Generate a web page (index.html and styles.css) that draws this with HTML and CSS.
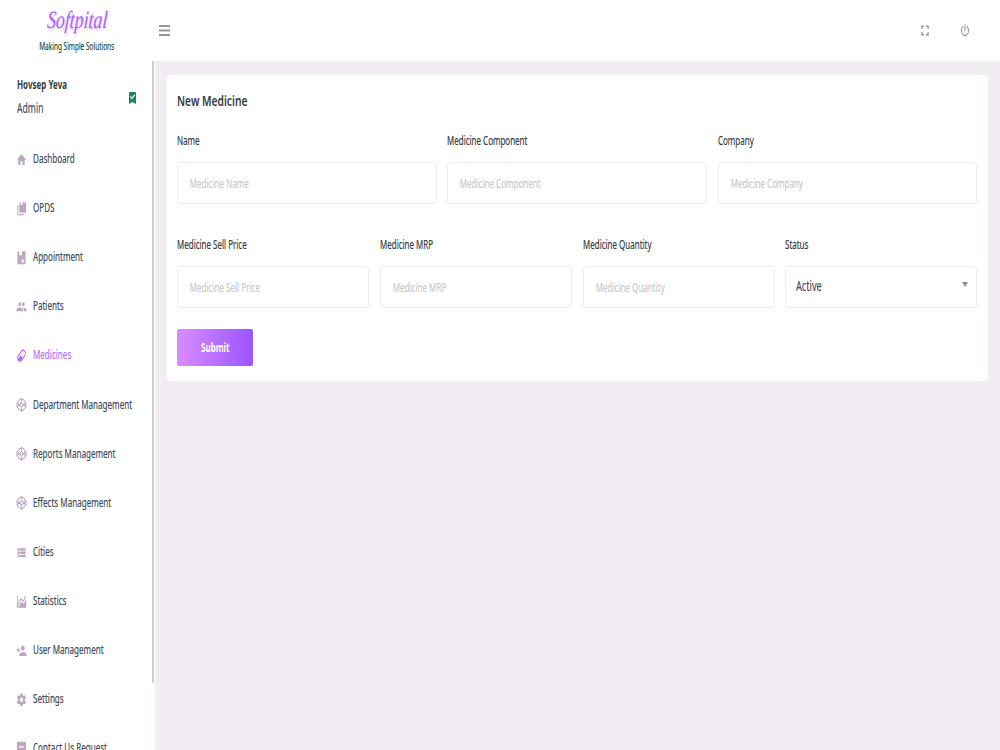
FILE: index.html
```html
<!DOCTYPE html>
<html lang="en">
<head>
    <meta charset="UTF-8">
    <meta name="viewport" content="width=device-width, initial-scale=1.0">
    <title>New Medicine</title>
    <link rel="stylesheet" href="styles.css">
</head>
<body>

<header class="navbar">
    <div class="brand">
        <span class="brand-name">Softpital</span>
        <span class="brand-slogan">Making Simple Solutions</span>
    </div>
    <button class="icon-button menu-toggle">
        <svg viewBox="0 0 11 11" preserveAspectRatio="none"><path d="M0,0H11V2H0zM0,4.5H11V6.5H0zM0,9H11V11H0z"/></svg>
    </button>
    <div class="navbar-right">
        <button class="icon-button">
            <svg class="nav-icon" viewBox="0 0 24 24" preserveAspectRatio="none"><path d="M4.5,5H10V7.2H7V10H4.5V5M14,5H19.5V10H17V7.2H14V5M17,14H19.5V19H14V16.8H17V14M10,16.8V19H4.5V14H7V16.8H10Z"/></svg>
        </button>
        <button class="icon-button">
            <svg class="nav-icon" viewBox="0 0 24 24" preserveAspectRatio="none"><path d="M16.56,5.44L15.11,6.89C16.84,7.94 18,9.83 18,12A6,6 0 0,1 12,18A6,6 0 0,1 6,12C6,9.83 7.16,7.94 8.88,6.88L7.44,5.44C5.36,6.88 4,9.28 4,12A8,8 0 0,0 12,20A8,8 0 0,0 20,12C20,9.28 18.64,6.88 16.56,5.44M13,3H11V13H13"/></svg>
        </button>
    </div>
</header>

<div class="page-body">
    <nav class="sidebar">
        <div class="profile">
            <div class="profile-text">
                <span class="profile-name">Hovsep Yeva</span>
                <span class="profile-role">Admin</span>
            </div>
            <svg class="profile-badge" viewBox="5 3 14 18" preserveAspectRatio="none"><path d="M17,3A2,2 0 0,1 19,5V21L12,18L5,21V5C5,3.89 5.9,3 7,3H17M11,14L17.25,7.76L15.84,6.34L11,11.18L8.41,8.59L7,10L11,14Z"/></svg>
        </div>
        <ul class="menu">
            <li class="menu-item">
                <svg class="menu-icon" viewBox="0 0 24 24" preserveAspectRatio="none"><path d="M10,20V14H14V20H19V12H22L12,3L2,12H5V20H10Z"/></svg>
                <span class="menu-title">Dashboard</span>
            </li>
            <li class="menu-item">
                <svg class="menu-icon" viewBox="0 0 24 24" preserveAspectRatio="none"><path d="M20,18H9A2,2 0 0,1 7,16V4A2,2 0 0,1 9,2H10V7L12,5.5L14,7V2H20A2,2 0 0,1 22,4V16A2,2 0 0,1 20,18M17,20V22H5A2,2 0 0,1 3,20V6H5V20H17Z"/></svg>
                <span class="menu-title">OPDS</span>
            </li>
            <li class="menu-item">
                <svg class="menu-icon" viewBox="0 0 24 24" preserveAspectRatio="none"><path fill-rule="evenodd" d="M19,22H5A2,2 0 0,1 3,20V4A2,2 0 0,1 5,2H7V9L10,7.5L13,9V2H19A2,2 0 0,1 21,4V20A2,2 0 0,1 19,22M14,20H16V18H18V16H16V14H14V16H12V18H14Z"/></svg>
                <span class="menu-title">Appointment</span>
            </li>
            <li class="menu-item">
                <svg class="menu-icon" viewBox="0 0 24 24" preserveAspectRatio="none"><path d="M16,13C15.71,13 15.38,13 15.03,13.05C16.19,13.89 17,15 17,16.5V19H23V16.5C23,14.17 18.33,13 16,13M8,13C5.67,13 1,14.17 1,16.5V19H15V16.5C15,14.17 10.33,13 8,13M8,11A3,3 0 0,0 11,8A3,3 0 0,0 8,5A3,3 0 0,0 5,8A3,3 0 0,0 8,11M16,11A3,3 0 0,0 19,8A3,3 0 0,0 16,5A3,3 0 0,0 13,8A3,3 0 0,0 16,11Z"/></svg>
                <span class="menu-title">Patients</span>
            </li>
            <li class="menu-item active">
                <svg class="menu-icon" viewBox="0 0 24 24" preserveAspectRatio="none"><path d="M4.22,11.29L11.29,4.22C13.64,1.88 17.43,1.88 19.78,4.22C22.12,6.56 22.12,10.36 19.78,12.71L12.71,19.78C10.36,22.12 6.56,22.12 4.22,19.78C1.88,17.43 1.88,13.64 4.22,11.29M10.59,10.59L14.83,14.83L18.36,11.29C19.93,9.73 19.93,7.2 18.36,5.64C16.8,4.07 14.27,4.07 12.71,5.64L5.64,12.71C4.59,13.75 4.24,15.24 4.6,16.57L10.59,10.59Z"/></svg>
                <span class="menu-title">Medicines</span>
            </li>
            <li class="menu-item">
                <svg class="menu-icon outline" viewBox="0 0 24 24" preserveAspectRatio="none"><path d="M12,2.5L17.5,5L22,9.5V14.5L17.5,19L12,21.5L6.5,19L2,14.5V9.5L6.5,5ZM12,2.5V9M12,15V21.5M2.5,9L12,15L21.5,9M2.5,15L12,9L21.5,15"/></svg>
                <span class="menu-title">Department Management</span>
            </li>
            <li class="menu-item">
                <svg class="menu-icon outline" viewBox="0 0 24 24" preserveAspectRatio="none"><path d="M12,2.5L17.5,5L22,9.5V14.5L17.5,19L12,21.5L6.5,19L2,14.5V9.5L6.5,5ZM12,2.5V9M12,15V21.5M2.5,9L12,15L21.5,9M2.5,15L12,9L21.5,15"/></svg>
                <span class="menu-title">Reports Management</span>
            </li>
            <li class="menu-item">
                <svg class="menu-icon outline" viewBox="0 0 24 24" preserveAspectRatio="none"><path d="M12,2.5L17.5,5L22,9.5V14.5L17.5,19L12,21.5L6.5,19L2,14.5V9.5L6.5,5ZM12,2.5V9M12,15V21.5M2.5,9L12,15L21.5,9M2.5,15L12,9L21.5,15"/></svg>
                <span class="menu-title">Effects Management</span>
            </li>
            <li class="menu-item">
                <svg class="menu-icon" viewBox="0 0 24 24" preserveAspectRatio="none"><path d="M9,5V9H21V5M9,19H21V15H9M9,14H21V10H9M3,9H8V5H3M3,19H8V15H3M3,14H8V10H3V14Z"/></svg>
                <span class="menu-title">Cities</span>
            </li>
            <li class="menu-item">
                <svg class="menu-icon" viewBox="0 0 24 24" preserveAspectRatio="none"><path d="M17.45,15.18L22,7.31V21H2V3H4V15.54L9.5,6L16,9.78L20.24,2.45L21.97,3.45L16.74,12.5L10.23,8.75L4.31,19H6.57L10.96,11.44L17.45,15.18Z"/></svg>
                <span class="menu-title">Statistics</span>
            </li>
            <li class="menu-item">
                <svg class="menu-icon" viewBox="0 0 24 24" preserveAspectRatio="none"><path d="M15,14C12.33,14 7,15.33 7,18V20H23V18C23,15.33 17.67,14 15,14M6,10V7H4V10H1V12H4V15H6V12H9V10M15,12A4,4 0 0,0 19,8A4,4 0 0,0 15,4A4,4 0 0,0 11,8A4,4 0 0,0 15,12Z"/></svg>
                <span class="menu-title">User Management</span>
            </li>
            <li class="menu-item">
                <svg class="menu-icon" viewBox="0 0 24 24" preserveAspectRatio="none"><path d="M12,15.5A3.5,3.5 0 0,1 8.5,12A3.5,3.5 0 0,1 12,8.5A3.5,3.5 0 0,1 15.5,12A3.5,3.5 0 0,1 12,15.5M19.43,12.97C19.47,12.65 19.5,12.33 19.5,12C19.5,11.67 19.47,11.34 19.43,11L21.54,9.37C21.73,9.22 21.78,8.95 21.66,8.73L19.66,5.27C19.54,5.05 19.27,4.96 19.05,5.05L16.56,6.05C16.04,5.66 15.5,5.32 14.87,5.07L14.5,2.42C14.46,2.18 14.25,2 14,2H10C9.75,2 9.54,2.18 9.5,2.42L9.13,5.07C8.5,5.32 7.96,5.66 7.44,6.05L4.95,5.05C4.73,4.96 4.46,5.05 4.34,5.27L2.34,8.73C2.21,8.95 2.27,9.22 2.46,9.37L4.57,11C4.53,11.34 4.5,11.67 4.5,12C4.5,12.33 4.53,12.65 4.57,12.97L2.46,14.63C2.27,14.78 2.21,15.05 2.34,15.27L4.34,18.73C4.46,18.95 4.73,19.03 4.95,18.95L7.44,17.94C7.96,18.34 8.5,18.68 9.13,18.93L9.5,21.58C9.54,21.82 9.75,22 10,22H14C14.25,22 14.46,21.82 14.5,21.58L14.87,18.93C15.5,18.67 16.04,18.34 16.56,17.94L19.05,18.95C19.27,19.03 19.54,18.95 19.66,18.73L21.66,15.27C21.78,15.05 21.73,14.78 21.54,14.63L19.43,12.97Z"/></svg>
                <span class="menu-title">Settings</span>
            </li>
            <li class="menu-item">
                <svg class="menu-icon" viewBox="0 0 24 24" preserveAspectRatio="none"><path fill-rule="evenodd" d="M4,1H20A2,2 0 0,1 22,3V22H2V3A2,2 0 0,1 4,1M6,8V10H18V8Z"/></svg>
                <span class="menu-title">Contact Us Request</span>
            </li>
        </ul>
    </nav>

    <main class="content">
        <form class="card">
            <h4 class="card-title"><span>New Medicine</span></h4>
            <div class="form-row three">
                <div class="form-group">
                    <label>Name</label>
                    <div class="control"><input type="text" placeholder="Medicine Name"></div>
                </div>
                <div class="form-group">
                    <label>Medicine Component</label>
                    <div class="control"><input type="text" placeholder="Medicine Component"></div>
                </div>
                <div class="form-group">
                    <label>Company</label>
                    <div class="control"><input type="text" placeholder="Medicine Company"></div>
                </div>
            </div>
            <div class="form-row four">
                <div class="form-group">
                    <label>Medicine Sell Price</label>
                    <div class="control"><input type="text" placeholder="Medicine Sell Price"></div>
                </div>
                <div class="form-group">
                    <label>Medicine MRP</label>
                    <div class="control"><input type="text" placeholder="Medicine MRP"></div>
                </div>
                <div class="form-group">
                    <label>Medicine Quantity</label>
                    <div class="control"><input type="text" placeholder="Medicine Quantity"></div>
                </div>
                <div class="form-group">
                    <label>Status</label>
                    <div class="control select">
                        <span class="select-value">Active</span>
                        <span class="select-arrow"></span>
                    </div>
                </div>
            </div>
            <button type="button" class="submit-button"><span>Submit</span></button>
        </form>
    </main>
</div>

</body>
</html>
```
FILE: styles.css
```css
* {
    box-sizing: border-box;
}

body {
    margin: 0;
    height: 750px;
    overflow: hidden;
    font-family: "Noto Sans", "Open Sans", sans-serif;
    font-size: 12px;
    color: #343a40;
    background-color: #f2edf3;
}

.navbar {
    display: flex;
    align-items: center;
    height: 61px;
    background-color: white;
}

.brand {
    display: flex;
    flex-direction: column;
    align-items: center;
    width: 154px;
    height: 61px;
    padding-top: 5px;
}

.brand-name {
    font-family: "Liberation Serif", serif;
    font-style: italic;
    font-size: 25px;
    line-height: 30px;
    color: #ac5cff;
    text-shadow: 1px 2px 3px rgba(120, 60, 160, 0.3);
    transform: scaleX(0.71) skewX(-6deg);
}

.brand-slogan {
    font-family: "Noto Sans", sans-serif;
    font-size: 10px;
    line-height: 14px;
    margin-top: 4px;
    white-space: nowrap;
    color: #17472f;
    -webkit-text-stroke: 0.15px;
    transform: scaleX(0.65);
}

.icon-button {
    display: flex;
    padding: 0;
    border: none;
    background: none;
    fill: #92959d;
}

.menu-toggle {
    margin-left: 5px;
}

.menu-toggle svg {
    width: 11px;
    height: 11px;
}

.navbar-right {
    display: flex;
    gap: 28px;
    margin-left: auto;
    margin-right: 29px;
}

.nav-icon {
    width: 12px;
    height: 17px;
}

.page-body {
    display: flex;
    height: 689px;
}

.sidebar {
    position: relative;
    width: 154.5px;
    flex-shrink: 0;
    overflow: hidden;
    background-color: white;
}

/* scrollbar thumb */
.sidebar::after {
    content: "";
    position: absolute;
    top: 0;
    right: 0.5px;
    width: 2px;
    height: 622px;
    background-color: #cdcdcf;
}

.profile {
    display: flex;
    align-items: center;
    justify-content: space-between;
    height: 73px;
    padding: 0 18.5px 0 16.5px;
}

.profile-text {
    display: flex;
    flex-direction: column;
    gap: 5px;
    margin-top: -2px;
}

.profile-name,
.profile-role {
    line-height: 18px;
    white-space: nowrap;
    transform-origin: left;
}

.profile-name {
    font-size: 11.5px;
    font-weight: bold;
    color: #343a40;
    transform: scaleX(0.695);
}

.profile-role {
    font-size: 13.5px;
    color: #3e4b5b;
    -webkit-text-stroke: 0.15px;
    transform: scaleX(0.64);
}

.profile-badge {
    width: 7px;
    height: 12px;
    fill: #198754;
}

.menu {
    list-style: none;
    margin: 0;
    padding: 0 0 0 16.4px;
}

.menu-item {
    display: flex;
    align-items: center;
    gap: 5.6px;
    height: 49.1px;
    color: #3e4b5b;
}

.menu-icon {
    flex-shrink: 0;
    width: 11px;
    height: 15.6px;
    margin-top: 2px;
    fill: #bba8bf;
}

.menu-icon.outline {
    fill: none;
    stroke: #bba8bf;
    stroke-width: 1.9;
}

.menu-title {
    white-space: nowrap;
    -webkit-text-stroke: 0.18px;
    transform: scaleX(0.672);
    transform-origin: left;
}

.menu-item.active {
    color: #b66dff;
}

.menu-item.active .menu-icon {
    fill: #b66dff;
}

.content {
    flex: 1;
    padding: 14px 12px 0;
}

.card {
    height: 306px;
    padding: 16px 10.7px;
    border-radius: 4px;
    background-color: white;
}

.card-title {
    margin: 0;
    font-size: 14px;
    font-weight: 600;
    line-height: 20px;
}

.card-title span,
.form-group label {
    display: block;
    width: max-content;
    transform-origin: left;
}

.card-title span {
    transform: scaleX(0.731);
}

.form-row {
    display: grid;
    gap: 10.6px;
}

.three {
    grid-template-columns: repeat(3, 1fr);
    margin-top: 21px;
}

.four {
    grid-template-columns: repeat(4, 1fr);
    margin-top: 32px;
}

.form-group label {
    line-height: 18px;
    margin-bottom: 12px;
    -webkit-text-stroke: 0.18px;
    transform: scaleX(0.665);
}

.control {
    height: 42px;
    overflow: hidden;
    border: 1px solid #ebedf2;
    border-radius: 3px;
}

.control input {
    width: 148%;
    height: 40px;
    padding: 0 17.5px;
    border: none;
    outline: none;
    background: none;
    font-family: inherit;
    font-size: 12px;
    -webkit-text-stroke: 0.15px;
    transform: scaleX(0.67);
    transform-origin: left;
}

.control input::placeholder {
    color: #c9c8c8;
}

.select {
    display: flex;
    align-items: center;
    justify-content: space-between;
    padding: 0 8px 3px 10px;
}

.select-value {
    font-size: 13.5px;
    color: #3e4b5b;
    -webkit-text-stroke: 0.15px;
    transform: scaleX(0.68);
    transform-origin: left;
}

.select-arrow {
    border: 3.5px solid transparent;
    border-top: 5px solid #8e8e8e;
    border-bottom: none;
    margin-bottom: 2px;
}

.submit-button {
    display: block;
    width: 76px;
    height: 37px;
    margin-top: 21px;
    padding: 0;
    border: none;
    border-radius: 2px;
    background: linear-gradient(to right, #da8cff, #9a55ff);
    color: white;
    font-family: inherit;
    font-size: 12px;
    font-weight: bold;
}

.submit-button span {
    display: inline-block;
    transform: scaleX(0.67);
}
```
